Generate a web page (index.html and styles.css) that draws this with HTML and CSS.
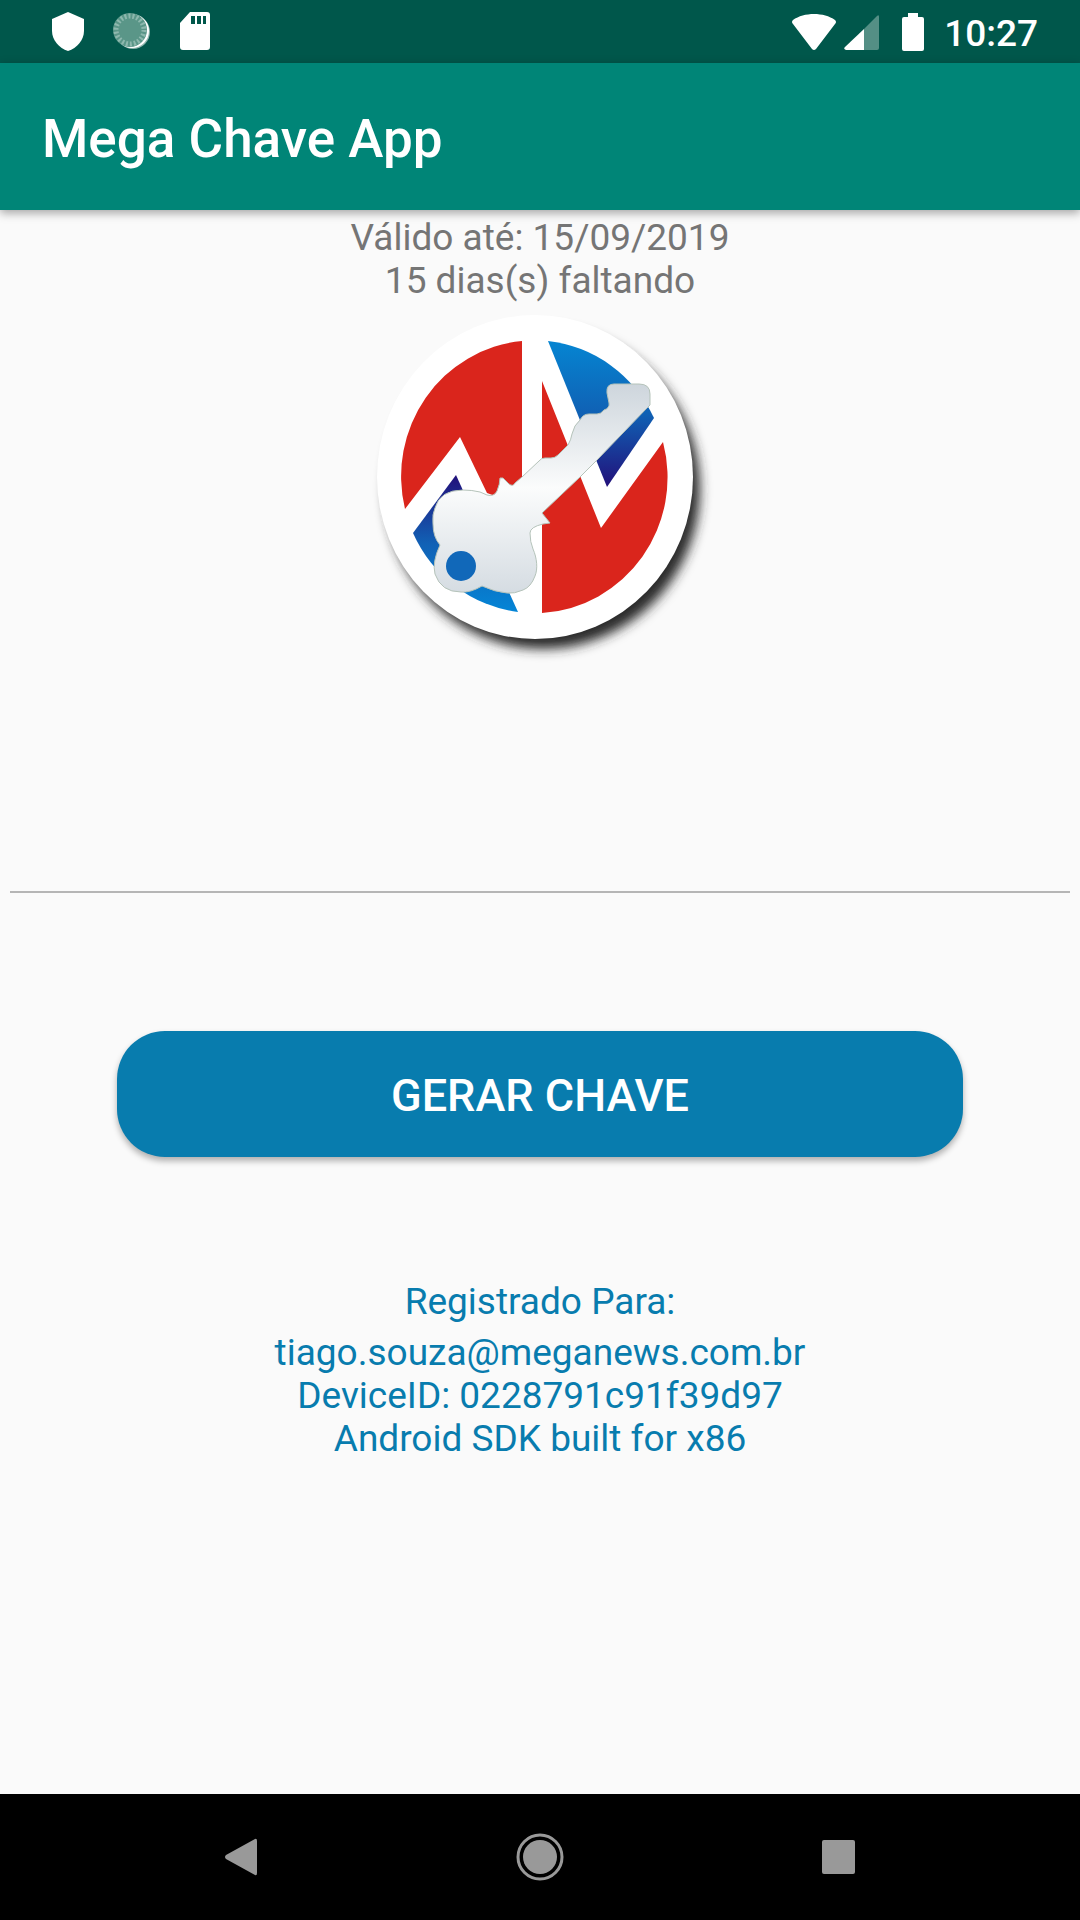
FILE: index.html
```html
<!DOCTYPE html>
<html lang="pt-BR">
<head>
<meta charset="UTF-8">
<meta name="viewport" content="width=device-width">
<title>Mega Chave App</title>
<link rel="stylesheet" href="styles.css">
</head>
<body>
<div class="statusbar">
    <div class="notifications">
        <svg width="63" height="63" viewBox="0 0 63 63"><path fill="#fff" d="M31 12L47 19V31C47 40 40 48 31 51C22 48 15 40 15 31V19Z"/></svg>
        <svg width="63" height="63" viewBox="0 0 63 63">
            <circle cx="33" cy="32" r="17" fill="#8fb5ae"/>
            <circle cx="32" cy="31" r="17" fill="#fff"/>
            <circle cx="30" cy="30" r="17" fill="#5a9688"/>
            <circle cx="30" cy="30" r="14" fill="none" stroke="#8db8ae" stroke-width="5" stroke-dasharray="2 2"/>
        </svg>
        <svg width="63" height="63" viewBox="0 0 63 63"><path fill="#fff" fill-rule="evenodd" d="M27 12H44Q47 12 47 15V47Q47 50 44 50H20Q17 50 17 47V23ZM28 16V24H32V16ZM34 16V24H38V16ZM40 16V24H43V16Z"/></svg>
    </div>
    <div class="system">
        <svg class="wifi" width="44" height="36" viewBox="0 0 44 36"><path fill="#fff" d="M1 6C12-2 32-2 43 6Q45 8 43 10L24 35Q22 37 20 35L1 10Q-1 8 1 6Z"/></svg>
        <svg class="signal" width="35" height="36" viewBox="0 0 35 36"><path fill="#548f85" d="M20 15L33 2Q35 0 35 3V34Q35 36 33 36H20Z"/><path fill="#fff" d="M20 15V36H2Q-1 35 1 33Z"/></svg>
        <svg class="battery" width="22" height="38" viewBox="0 0 22 38"><path fill="#fff" d="M6 0H16V4H20Q22 4 22 6V36Q22 38 20 38H2Q0 38 0 36V6Q0 4 2 4H6Z"/></svg>
        <span class="clock">10:27</span>
    </div>
</div>
<header class="appbar">
    <h1>Mega Chave App</h1>
</header>
<main class="content">
    <p class="validity">Válido até: 15/09/2019<br>15 dias(s) faltando</p>
    <svg class="logo" width="350" height="360" viewBox="0 0 350 360">
        <defs>
            <linearGradient id="blueTop" x1="0" y1="0" x2="0" y2="1">
                <stop offset="0" stop-color="#0585d2"/>
                <stop offset="0.5" stop-color="#1061b4"/>
                <stop offset="1" stop-color="#22107a"/>
            </linearGradient>
            <linearGradient id="blueBottom" x1="0" y1="0" x2="0" y2="1">
                <stop offset="0" stop-color="#22107a"/>
                <stop offset="0.5" stop-color="#1161b5"/>
                <stop offset="1" stop-color="#0485d6"/>
            </linearGradient>
            <linearGradient id="silver" gradientUnits="userSpaceOnUse" x1="0" y1="77" x2="0" y2="287">
                <stop offset="0" stop-color="#cdd5dc"/>
                <stop offset="0.5" stop-color="#fbfcfc"/>
                <stop offset="1" stop-color="#d5dce2"/>
            </linearGradient>
            <filter id="shadow" x="-10%" y="-10%" width="125%" height="125%">
                <feGaussianBlur stdDeviation="6"/>
            </filter>
        </defs>
        <ellipse cx="178" cy="183" rx="157" ry="160" fill="#2b2b2b" filter="url(#shadow)"/>
        <ellipse cx="170" cy="171" rx="158" ry="162" fill="#fff"/>
        <path fill="#da251c" d="M157 35A133.5 136 0 0 0 40 203L95 131L122 187L157 200Z"/>
        <path fill="#da251c" d="M177 75L236 222L298 136A133.5 136 0 0 1 177 307Z"/>
        <path fill="url(#blueTop)" d="M183 35A133.5 136 0 0 1 289 112L242 181Z"/>
        <path fill="url(#blueBottom)" d="M91 169L48 227A133.5 136 0 0 0 153 306Z"/>
        <path fill="url(#silver)" stroke="#b5c3ba" stroke-width="1" d="M70 202Q75 184 98 184Q107 184 115 186L122 189Q129 191 132 185Q135 178 135 172H138L144 178Q148 181 150 177L157 171L174 155Q176 152 180 152H186Q190 152 193 149L203 139Q206 134 207 128Q209 119 215 114Q218 108 224 108H232Q236 108 239 104Q245 102 244 97L242 87Q241 78 249 78H274Q285 78 285 88V99L282 102L232 154L215 171L177 207L185 217L178 218Q165 221 165 227Q165 236 168 243C172 252 173 263 170 270Q166 281 158 284Q149 288 142 287Q130 286 117 280Q105 287 96 286Q76 286 70 268Q67 256 75 239Q68 231 68 218Q67 208 70 202Z"/>
        <ellipse cx="96" cy="260" rx="15" ry="15" fill="#1168b9"/>
    </svg>
    <input class="key" type="text" aria-label="Chave" readonly>
    <button class="generate" type="button">GERAR CHAVE</button>
    <section class="registration">
        <p>Registrado Para:</p>
        <p>tiago.souza@meganews.com.br<br>DeviceID: 0228791c91f39d97<br>Android SDK built for x86</p>
    </section>
</main>
<nav class="navbar">
    <button type="button" aria-label="Voltar"><svg width="50" height="50" viewBox="0 0 50 50"><path fill="#999" d="M39 7Q41 6 41 9V41Q41 44 39 43L10 27Q8 25 10 23Z"/></svg></button>
    <button type="button" aria-label="Início"><svg width="50" height="50" viewBox="0 0 50 50"><circle cx="25" cy="25" r="17" fill="#999"/><circle cx="25" cy="25" r="22" fill="none" stroke="#999" stroke-width="3"/></svg></button>
    <button type="button" aria-label="Recentes"><svg width="50" height="50" viewBox="0 0 50 50"><rect x="8" y="8" width="33" height="34" rx="2" fill="#999"/></svg></button>
</nav>
</body>
</html>
```
FILE: styles.css
```css
html, body {
    margin: 0;
    height: 100%;
}
body {
    display: flex;
    flex-direction: column;
    background-color: #fafafa;
    font-family: Roboto, sans-serif;
    font-size: 37px;
    line-height: 43px;
}
h1, p {
    margin: 0;
}
svg {
    display: block;
}
button {
    border: 0;
    padding: 0;
    font-family: inherit;
}

.statusbar {
    display: flex;
    justify-content: space-between;
    height: 63px;
    padding: 0 42px 0 37px;
    background-color: #00574b;
    color: #fff;
}
.notifications, .system {
    display: flex;
    align-items: center;
}
.signal {
    margin: 0 23px 0 8px;
}
.clock {
    margin-left: 20px;
    padding-top: 3px;
    font-weight: 500;
}

.appbar {
    display: flex;
    align-items: center;
    box-sizing: border-box;
    height: 147px;
    padding: 4px 42px 0;
    background-color: #008577;
    color: #fff;
    box-shadow: 0 3px 9px rgba(0, 0, 0, 0.35);
}
.appbar h1 {
    font-size: 53px;
    font-weight: 500;
    line-height: 62px;
}

.content {
    flex: 1;
    display: flex;
    flex-direction: column;
    align-items: center;
    padding: 6px 10px 0;
    text-align: center;
}
.validity {
    color: #757575;
}
.logo {
    margin-top: 4px;
}
.key {
    box-sizing: border-box;
    width: 100%;
    height: 107px;
    margin-top: 120px;
    border: 0;
    border-bottom: 2px solid #b5b5b5;
    background: none;
    font: inherit;
    text-align: center;
    outline: none;
}
.generate {
    align-self: stretch;
    height: 126px;
    margin: 138px 107px 0;
    padding-top: 2px;
    border-radius: 48px;
    background-color: #087cae;
    color: #fff;
    font-size: 45px;
    font-weight: 500;
    box-shadow: 0 4px 6px rgba(0, 0, 0, 0.3);
}
.registration {
    display: flex;
    flex-direction: column;
    gap: 8px;
    margin-top: 123px;
    color: #087cae;
}

.navbar {
    display: grid;
    grid-template-columns: repeat(3, 1fr);
    height: 126px;
    padding: 0 92px;
    background-color: #000;
}
.navbar button {
    display: flex;
    align-items: center;
    justify-content: center;
    background: none;
}
```
